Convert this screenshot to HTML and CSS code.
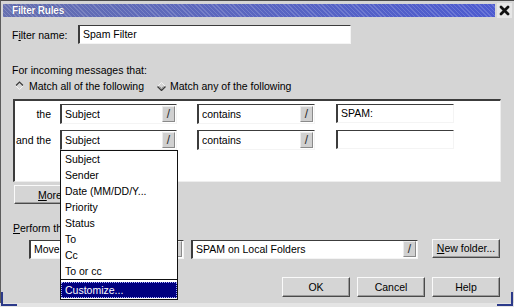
FILE: index.html
```html
<!DOCTYPE html>
<html>
<head>
<meta charset="utf-8">
<title>Filter Rules</title>
<link rel="stylesheet" href="styles.css">
</head>
<body>
<div class="window">
  <div class="titlerow">
    <div class="titlebar">Filter Rules</div>
    <div class="closebtn">
      <svg width="11" height="11" viewBox="0 0 11 11"><path d="M2 2 L9 9 M9 2 L2 9" stroke="#111" stroke-width="2.8" stroke-linecap="round"/></svg>
    </div>
  </div>
  <div class="content">
    <div class="namerow">
      <span class="namelbl">F<u>i</u>lter name:</span>
      <div class="field namefield">Spam Filter</div>
    </div>
    <div class="intro">For incoming messages that:</div>
    <div class="radios">
      <span class="radio first">
        <svg class="rmark" width="9" height="9" viewBox="0 0 9 9"><path d="M0.5 4.5 L4.5 8.5 L8.5 4.5" fill="none" stroke="#f4f4f4" stroke-width="1"/><path d="M1 4.5 L4.5 1 L8 4.5" fill="none" stroke="#3a3a3a" stroke-width="1.2"/></svg>
        Match all of the following
      </span>
      <span class="radio second">
        <svg class="rmark" width="9" height="9" viewBox="0 0 9 9"><path d="M0.5 4.5 L4.5 0.5 L8.5 4.5" fill="none" stroke="#f4f4f4" stroke-width="1"/><path d="M0.5 4.5 L4.5 8.5 L8.5 4.5" fill="none" stroke="#3a3a3a" stroke-width="1.3"/><path d="M2.5 4.5 L4.5 6.5 L6.5 4.5" fill="none" stroke="#9a9a9a" stroke-width="1"/></svg>
        Match any of the following
      </span>
    </div>
    <div class="rules">
      <div class="rule">
        <span class="rlabel">the</span>
        <div class="select s-field"><span class="stext">Subject</span><span class="arrow">/</span></div>
        <div class="select s-op"><span class="stext">contains</span><span class="arrow">/</span></div>
        <div class="field s-val">SPAM:</div>
      </div>
      <div class="rule">
        <span class="rlabel">and the</span>
        <div class="select s-field"><span class="stext">Subject</span><span class="arrow">/</span></div>
        <div class="select s-op"><span class="stext">contains</span><span class="arrow">/</span></div>
        <div class="field s-val"></div>
      </div>
    </div>
    <div class="morerow">
      <div class="btn more"><u>M</u>ore</div>
    </div>
    <div class="perform"><u>P</u>erform this action:</div>
    <div class="actionrow">
      <div class="select s-action"><span class="stext">Move to folder</span><span class="arrow">/</span></div>
      <div class="select s-folder"><span class="stext">SPAM on Local Folders</span><span class="arrow">/</span></div>
      <div class="btn newfolder"><u>N</u>ew folder...</div>
    </div>
    <div class="buttons">
      <div class="btn dlg">OK</div>
      <div class="btn dlg">Cancel</div>
      <div class="btn dlg">Help</div>
    </div>
  </div>
  <div class="dropdown">
    <div class="item">Subject</div>
    <div class="item">Sender</div>
    <div class="item">Date (MM/DD/Y...</div>
    <div class="item">Priority</div>
    <div class="item">Status</div>
    <div class="item">To</div>
    <div class="item">Cc</div>
    <div class="item">To or cc</div>
    <div class="sep"></div>
    <div class="item selected">Customize...</div>
  </div>
</div>
<div class="corner left"></div>
<div class="corner right"></div>
</body>
</html>
```

FILE: styles.css
```css
* { box-sizing: border-box; }
html, body { margin: 0; padding: 0; }
body {
  position: relative;
  width: 514px;
  height: 307px;
  overflow: hidden;
  background: #e4e4e4;
  font-family: "Liberation Sans", Arial, sans-serif;
  font-size: 10.5px;
  color: #000;
}
u { text-decoration: underline; text-underline-offset: 1px; }

.window {
  position: relative;
  width: 514px;
  height: 303px;
  background: #d5d5d5;
  border-top: 1px solid #4a4a4a;
  border-left: 1px solid #5c5c5c;
}

.titlerow {
  display: flex;
  height: 15px;
  margin-top: 2px;
  padding-left: 2px;
  gap: 2px;
}
.titlebar {
  flex: 1;
  margin: 1px 0;
  height: 13px;
  line-height: 13px;
  padding-left: 9px;
  color: #fff;
  font-weight: bold;
  font-size: 10px;
  letter-spacing: -0.2px;
  text-shadow: 0 0 1px #2a3070;
  background:
    repeating-linear-gradient(45deg, rgba(255,255,255,0.16) 0 1px, transparent 1px 3px),
    linear-gradient(to right, #6670b0, #4d5bd0);
}
.closebtn {
  width: 15px;
  height: 15px;
  margin-right: 2px;
  background: #e6e6e6;
  display: flex;
  align-items: center;
  justify-content: center;
}

.content { padding: 0 14px 0 11px; }

.field {
  background: #fff;
  border-top: 1px solid #3c3c3c;
  border-left: 2px solid #3c3c3c;
  border-right: 1px solid #f4f4f4;
  border-bottom: 1px solid #f4f4f4;
  height: 19px;
  line-height: 17px;
  padding-left: 3px;
  white-space: nowrap;
  overflow: hidden;
}

.namerow {
  display: flex;
  align-items: center;
  margin-top: 7px;
  height: 19px;
}
.namelbl { width: 66px; }
.namefield { width: 273px; }

.intro {
  margin-top: 19px;
  height: 14px;
  line-height: 14px;
}
.radios {
  margin-top: 2px;
  height: 14px;
  line-height: 14px;
  display: flex;
}
.radio { display: inline-flex; align-items: center; white-space: nowrap; }
.radio.first { margin-left: 3px; width: 142px; }
.rmark { margin-right: 5px; flex: none; }
.radio.first .rmark { margin-top: -1px; }
.radio.second .rmark { margin-right: 4px; margin-top: 1px; }

.rules {
  margin-top: 6px;
  margin-left: 1px;
  width: 488px;
  height: 83px;
  background: #fff;
  border-top: 2px solid #3c3c3c;
  border-left: 2px solid #3c3c3c;
  border-right: 1px solid #eeeeee;
  border-bottom: 1px solid #eeeeee;
  padding-top: 3px;
  display: flex;
  flex-direction: column;
  gap: 6px;
}
.rule {
  display: flex;
  align-items: center;
  height: 20px;
}
.rlabel {
  width: 36px;
  margin-right: 9px;
  text-align: right;
  white-space: nowrap;
}

.select {
  display: flex;
  align-items: center;
  justify-content: space-between;
  background: #fff;
  border-top: 1px solid #3c3c3c;
  border-left: 2px solid #3c3c3c;
  border-right: 1px solid #f4f4f4;
  border-bottom: 1px solid #f4f4f4;
  height: 20px;
  padding-left: 3px;
  white-space: nowrap;
  overflow: hidden;
}
.stext { overflow: hidden; }
.arrow {
  flex: none;
  width: 13px;
  height: 16px;
  margin-right: 1px;
  background: #d0d0d0;
  border-top: 1px solid #ececec;
  border-left: 1px solid #ececec;
  border-right: 1px solid #8a8a8a;
  border-bottom: 1px solid #8a8a8a;
  color: #2a2a2a;
  font-size: 12px;
  line-height: 14px;
  text-align: center;
}
.s-field { width: 117px; margin-right: 20px; }
.s-op { width: 118px; margin-right: 21px; }
.s-val { width: 118px; margin-top: -1px; }

.btn {
  display: flex;
  align-items: center;
  justify-content: center;
  background: #d5d5d5;
  border-top: 1px solid #fafafa;
  border-left: 1px solid #fafafa;
  border-right: 1px solid #4a4a4a;
  border-bottom: 1px solid #4a4a4a;
  box-shadow: inset -1px -1px 0 #9a9a9a;
  white-space: nowrap;
}
.morerow { margin-top: 3px; margin-left: 2px; height: 19px; display: flex; }
.more { width: 72px; height: 19px; }

.perform {
  margin-top: 17px;
  margin-left: 1px;
  height: 14px;
  line-height: 14px;
}
.actionrow {
  margin-top: 4px;
  height: 20px;
  display: flex;
  align-items: center;
}
.s-action { width: 155px; margin-left: 17px; margin-right: 7px; height: 19px; }
.s-folder { width: 227px; margin-right: 14px; height: 19px; }
.newfolder { width: 68px; height: 19px; margin-top: -2px; }

.buttons {
  margin-top: 18px;
  display: flex;
  justify-content: flex-end;
  gap: 7px;
}
.dlg { width: 68px; height: 20px; }

.dropdown {
  position: absolute;
  left: 59px;
  top: 149px;
  width: 118px;
  height: 150px;
  background: #fff;
  border: 1px solid #111;
  display: flex;
  flex-direction: column;
}
.item {
  height: 16px;
  line-height: 16px;
  padding-left: 4px;
  white-space: nowrap;
}
.sep {
  height: 3px;
  border-top: 1px solid #111;
}
.item.selected {
  background: #000080;
  color: #fff;
  outline: 1px dotted #aab0ff;
  outline-offset: -1px;
  height: 16px;
}

.corner { position: absolute; border-color: #2c3a8a; border-style: solid; }
.corner.left { left: 1px; top: 292px; width: 16px; height: 14px; border-width: 0 0 2px 2px; }
.corner.right { left: 497px; top: 292px; width: 16px; height: 14px; border-width: 0 2px 2px 0; }
```
